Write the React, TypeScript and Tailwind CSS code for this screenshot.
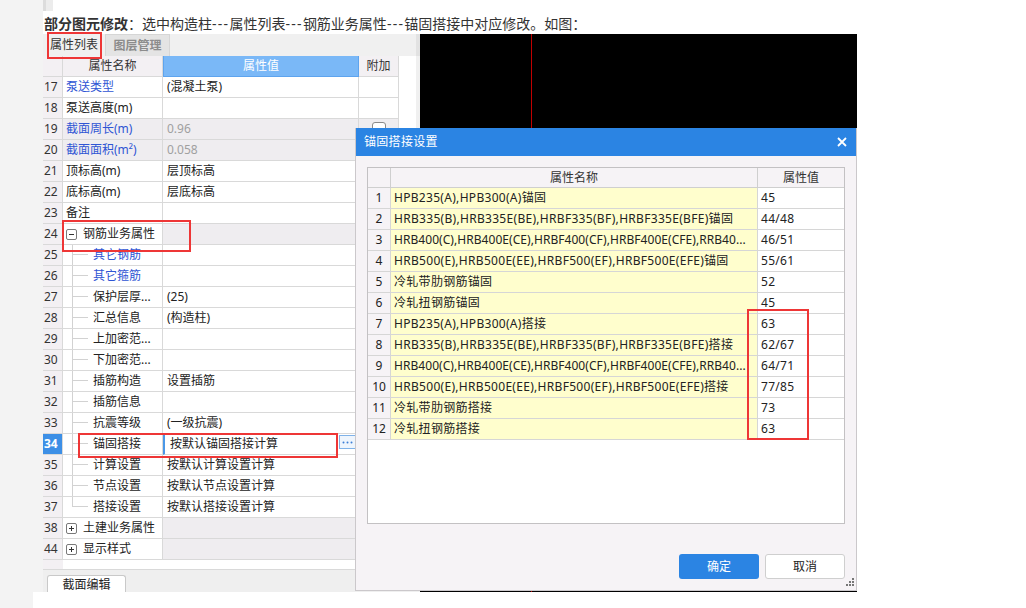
import clsx from "clsx";

type PropRow = {
  n: number;
  name: string;
  value?: string;
  kind?: "open" | "closed" | "child";
  blue?: boolean;
  gray?: boolean;
  last?: boolean;
  active?: boolean;
  check?: boolean;
};

const propRows: PropRow[] = [
  { n: 17, name: "泵送类型", value: "(混凝土泵)", blue: true },
  { n: 18, name: "泵送高度(m)" },
  { n: 19, name: "截面周长(m)", value: "0.96", blue: true, gray: true, check: true },
  { n: 20, name: "截面面积(m²)", value: "0.058", blue: true, gray: true },
  { n: 21, name: "顶标高(m)", value: "层顶标高" },
  { n: 22, name: "底标高(m)", value: "层底标高" },
  { n: 23, name: "备注" },
  { n: 24, name: "钢筋业务属性", kind: "open" },
  { n: 25, name: "其它钢筋", kind: "child", blue: true },
  { n: 26, name: "其它箍筋", kind: "child", blue: true },
  { n: 27, name: "保护层厚...", value: "(25)", kind: "child" },
  { n: 28, name: "汇总信息", value: "(构造柱)", kind: "child" },
  { n: 29, name: "上加密范...", kind: "child" },
  { n: 30, name: "下加密范...", kind: "child" },
  { n: 31, name: "插筋构造", value: "设置插筋", kind: "child" },
  { n: 32, name: "插筋信息", kind: "child" },
  { n: 33, name: "抗震等级", value: "(一级抗震)", kind: "child" },
  { n: 34, name: "锚固搭接", value: "按默认锚固搭接计算", kind: "child", active: true },
  { n: 35, name: "计算设置", value: "按默认计算设置计算", kind: "child" },
  { n: 36, name: "节点设置", value: "按默认节点设置计算", kind: "child" },
  { n: 37, name: "搭接设置", value: "按默认搭接设置计算", kind: "child", last: true },
  { n: 38, name: "土建业务属性", kind: "closed" },
  { n: 44, name: "显示样式", kind: "closed" },
];

const anchorRows = [
  ["HPB235(A),HPB300(A)锚固", "45"],
  ["HRB335(B),HRB335E(BE),HRBF335(BF),HRBF335E(BFE)锚固", "44/48"],
  ["HRB400(C),HRB400E(CE),HRBF400(CF),HRBF400E(CFE),RRB40...", "46/51"],
  ["HRB500(E),HRB500E(EE),HRBF500(EF),HRBF500E(EFE)锚固", "55/61"],
  ["冷轧带肋钢筋锚固", "52"],
  ["冷轧扭钢筋锚固", "45"],
  ["HPB235(A),HPB300(A)搭接", "63"],
  ["HRB335(B),HRB335E(BE),HRBF335(BF),HRBF335E(BFE)搭接", "62/67"],
  ["HRB400(C),HRB400E(CE),HRBF400(CF),HRBF400E(CFE),RRB40...", "64/71"],
  ["HRB500(E),HRB500E(EE),HRBF500(EF),HRBF500E(EFE)搭接", "77/85"],
  ["冷轧带肋钢筋搭接", "73"],
  ["冷轧扭钢筋搭接", "63"],
];

function Expander({ open }: { open: boolean }) {
  return (
    <svg width="11" height="11" viewBox="0 0 11 11" className="shrink-0">
      <rect x="0.5" y="0.5" width="10" height="10" rx="1.5" fill="white" stroke="#7a7a7a" />
      <path d="M3 5.5h5" stroke="#333" />
      {!open && <path d="M5.5 3v5" stroke="#333" />}
    </svg>
  );
}

function TreeLines({ last }: { last?: boolean }) {
  return (
    <div className="ml-[9px] flex w-[16px] shrink-0 flex-col">
      <div className="h-[10px] border-b border-l border-[#d2d2d2]" />
      {!last && <div className="flex-1 border-l border-[#d2d2d2]" />}
    </div>
  );
}

function PropRowView({ row }: { row: PropRow }) {
  const group = row.kind === "open" || row.kind === "closed";
  const grayValue = row.gray || group;
  return (
    <div className="flex h-[21px]">
      <div
        className={clsx(
          "w-[20px] shrink-0 border-b border-r border-[#d9d9d9] pl-[1px] leading-[20px]",
          row.active ? "bg-[#3d8fe6] font-bold text-white" : "bg-[#f3f0f3] text-[#333]"
        )}
      >
        {row.n}
      </div>
      <div
        className={clsx(
          "flex w-[100px] shrink-0 items-stretch border-b border-r border-[#d9d9d9]",
          row.gray ? "bg-[#efedf0]" : "bg-white"
        )}
      >
        {row.kind === "child" && <TreeLines last={row.last} />}
        {group && (
          <div className="flex items-center pl-[3px] pr-[6px]">
            <Expander open={row.kind === "open"} />
          </div>
        )}
        <span
          className={clsx(
            "whitespace-nowrap leading-[20px]",
            row.kind === "child" ? "pl-[5px]" : group ? "" : "pl-[3px]",
            row.blue ? "text-[#2f55d4]" : "text-[#222]"
          )}
        >
          {row.name}
        </span>
      </div>
      <div
        className={clsx(
          "flex w-[196px] shrink-0 items-start justify-between border-b border-r border-[#d9d9d9]",
          grayValue ? "bg-[#efedf0]" : "bg-white",
          row.active ? "border-l-2 border-l-[#4a98e8] pl-[5px]" : "pl-[4px]"
        )}
      >
        <span className={clsx("leading-[20px]", row.gray ? "text-[#a0a0a0]" : "text-[#222]")}>
          {row.value}
        </span>
        {row.active && (
          <div className="mr-[2px] mt-[1px] flex h-[14px] w-[17px] items-center justify-center border border-[#7fb2e8] bg-[#eef5fd]">
            <svg width="11" height="3" viewBox="0 0 11 3">
              <circle cx="1.5" cy="1.5" r="1" fill="#3d7fd6" />
              <circle cx="5.5" cy="1.5" r="1" fill="#3d7fd6" />
              <circle cx="9.5" cy="1.5" r="1" fill="#3d7fd6" />
            </svg>
          </div>
        )}
      </div>
      <div
        className={clsx(
          "w-[40px] shrink-0 border-b border-r border-[#d9d9d9] pt-[3px]",
          grayValue ? "bg-[#efedf0]" : "bg-white"
        )}
      >
        {row.check && (
          <div className="mx-auto h-[14px] w-[14px] rounded-[3px] border border-[#8a8a8a] bg-white" />
        )}
      </div>
    </div>
  );
}

function PropertyPanel() {
  return (
    <div className="flex w-[377px] shrink-0 flex-col bg-white">
      {/* tabs */}
      <div className="flex h-[22px] bg-[#f0f0f0] text-[12px] leading-[21px]">
        <div className="w-[62px] pl-[7px] text-[#333]">属性列表</div>
        <div className="w-[65px] border-x border-t border-[#d6d6d6] bg-[#e4e4e4] text-center font-bold text-[#8c8c8c]">
          图层管理
        </div>
        <div className="flex-1" />
        <div className="w-[4px] bg-[#e2e2e2]" />
      </div>

      <div className="flex flex-1">
        <div className="flex flex-col">
          {/* header */}
          <div className="flex h-[21px] leading-[20px]">
            <div className="w-[20px] border-b border-r border-[#d9d9d9] bg-[#f3f0f3]" />
            <div className="w-[100px] border-b border-r border-[#d9d9d9] bg-[#f3f0f3] text-center text-[#333]">
              属性名称
            </div>
            <div className="w-[196px] border border-t-0 border-[#5ea4ee] bg-[#7ab8f7] text-center text-white">
              属性值
            </div>
            <div className="w-[40px] border-b border-r border-[#d9d9d9] bg-[#f3f0f3] text-center text-[#333]">
              附加
            </div>
          </div>
          {propRows.map((row) => (
            <PropRowView key={row.n} row={row} />
          ))}
          <div className="flex h-[10px] border-b border-[#d9d9d9]">
            <div className="w-[20px] bg-[#f3f0f3]" />
          </div>
        </div>
        <div className="flex-1" />
        <div className="w-[4px] bg-[#f0f0f0]" />
      </div>

      {/* bottom tab */}
      <div className="flex h-[22px] items-end bg-[#efefef] pl-[4px]">
        <div className="h-[17px] w-[79px] rounded-t-[3px] border-x border-t border-[#c9c9c9] bg-white text-center text-[12px] leading-[17px] text-[#222]">
          截面编辑
        </div>
      </div>
    </div>
  );
}

function AnchorDialog() {
  return (
    <div className="absolute left-[312px] top-[94px] flex h-[463px] w-[502px] flex-col border-x border-b border-[#cbc8cb] bg-[#f6f3f6]">
      <div className="flex h-[28px] shrink-0 items-center justify-between bg-[#2b84e3] pl-[8px] pr-[9px] text-[12px] text-white">
        <span className="tracking-[0.3px]">锚固搭接设置</span>
        <svg width="10" height="10" viewBox="0 0 10 10">
          <path d="M1 1l8 8M9 1l-8 8" stroke="white" strokeWidth="1.8" />
        </svg>
      </div>

      <div className="ml-[11px] mt-[11px] h-[357px] w-[478px] border border-[#c3c1c3] bg-white text-[12px]">
        <div className="flex h-[20px] bg-[#f6f3f6] leading-[19px] text-[#333]">
          <div className="w-[23px] border-b border-r border-[#cfcfcf]" />
          <div className="w-[367px] border-b border-r border-[#cfcfcf] text-center">属性名称</div>
          <div className="w-[86px] border-b border-[#cfcfcf] text-center">属性值</div>
        </div>
        {anchorRows.map(([name, value], i) => (
          <div key={i} className="flex h-[21px] leading-[20px] text-[#222]">
            <div className="w-[23px] border-b border-r border-[#d6d6d6] bg-[#f6f3f6] text-center">
              {i + 1}
            </div>
            <div
              className={clsx(
                "w-[367px] whitespace-nowrap border-b border-r border-[#d6d6d6] bg-[#fffecd] pl-[3px]",
                name.endsWith("...") ? "tracking-[0.05px]" : "tracking-[0.3px]"
              )}
            >
              {name}
            </div>
            <div className="w-[86px] border-b border-[#d6d6d6] pl-[3px] tracking-[0.3px]">{value}</div>
          </div>
        ))}
      </div>

      <div className="mt-[30px] flex justify-end gap-[6px] pr-[11px] text-[12px]">
        <button className="h-[25px] w-[80px] rounded-[3px] bg-[#2b84e3] text-white">确定</button>
        <button className="h-[25px] w-[80px] rounded-[3px] border border-[#cfcfcf] bg-white text-[#222]">
          取消
        </button>
      </div>

      <svg className="absolute bottom-[3px] right-[1px]" width="9" height="9" viewBox="0 0 9 9">
        <rect x="6" y="0" width="2" height="2" fill="#777" />
        <rect x="3" y="3" width="2" height="2" fill="#777" />
        <rect x="6" y="3" width="2" height="2" fill="#777" />
        <rect x="0" y="6" width="2" height="2" fill="#777" />
        <rect x="3" y="6" width="2" height="2" fill="#777" />
        <rect x="6" y="6" width="2" height="2" fill="#777" />
      </svg>
    </div>
  );
}

export default function App() {
  return (
    <div className="flex min-h-[608px] bg-white font-['Noto_Sans','Noto_Sans_CJK_SC',sans-serif]">
      <div className="flex w-[43px] shrink-0 flex-col">
        <div className="h-[592px] bg-[#f3f3f3]" />
        <div className="w-[33px] flex-1 bg-[#f3f3f3]" />
      </div>

      <div className="flex flex-col">
        <div className="h-[11px] w-[10px] border-l-[3px] border-[#dcdcdc] bg-[#ececec]" />
        <p className="h-[23px] pl-[1px] pt-[2px] text-[14px] leading-[21px] text-[#333] [text-spacing-trim:space-all]">
          <span className="font-bold">部分图元修改</span>：选中构造柱<span className="tracking-[1.3px]">---</span>属性列表<span className="tracking-[1.3px]">---</span>钢筋业务属性<span className="tracking-[1.3px]">---</span>锚固搭接中对应修改。如图：
        </p>

        {/* screenshot */}
        <div className="relative flex h-[558px] w-[814px] text-[12px]">
          <PropertyPanel />
          <div className="flex flex-1 bg-black">
            <div className="w-[111px]" />
            <div className="w-px bg-[#c00000]" />
          </div>

          <AnchorDialog />

          {/* annotation boxes */}
          <div className="absolute left-[4px] top-[-2px] h-[27px] w-[55px] border-2 border-[#ee3636]" />
          <div className="absolute left-[19px] top-[186px] h-[32px] w-[129px] border-2 border-[#ee3636]" />
          <div className="absolute left-[35px] top-[399px] h-[25px] w-[260px] border-2 border-[#ee3636]" />
          <div className="absolute left-[704px] top-[275px] h-[131px] w-[62px] border-2 border-[#ee3636]" />
        </div>
      </div>
    </div>
  );
}
